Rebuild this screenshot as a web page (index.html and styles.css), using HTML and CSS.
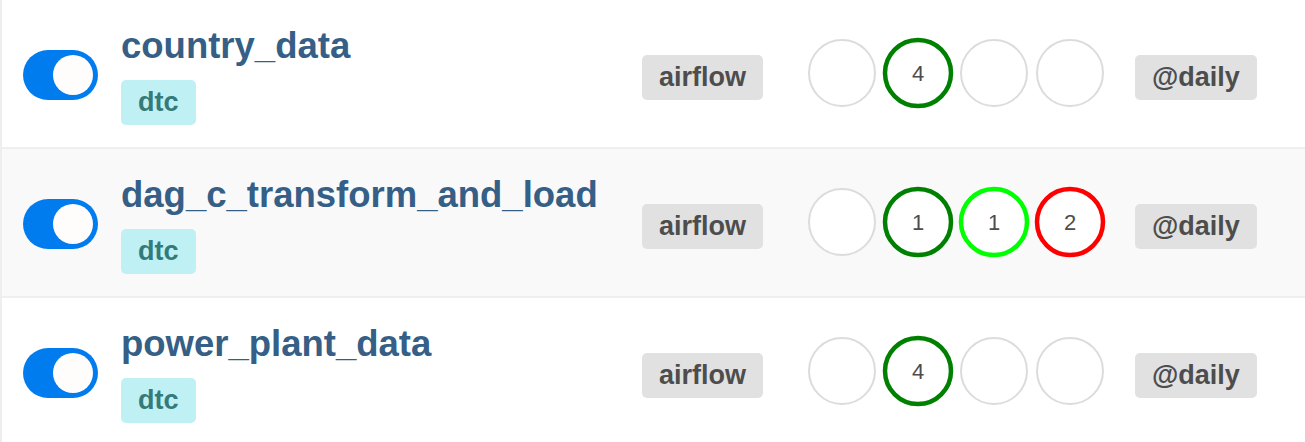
FILE: index.html
```html
<!DOCTYPE html>
<html lang="en">
<head>
<meta charset="utf-8">
<title>DAGs</title>
<link rel="stylesheet" href="styles.css">
</head>
<body>
<div class="dag-list">
  <div class="dag-row">
    <div class="cell-toggle"><span class="toggle"><span class="knob"></span></span></div>
    <div class="cell-name">
      <a class="dag-title">country_data</a>
      <span class="tag">dtc</span>
    </div>
    <div class="cell-owner"><span class="label">airflow</span></div>
    <div class="cell-runs">
      <svg class="runs" width="304" height="76" viewBox="0 0 304 76">
        <circle class="empty" cx="38" cy="38" r="33"/>
        <circle class="success" cx="114" cy="38" r="33"/>
        <text x="114" y="46">4</text>
        <circle class="empty" cx="190" cy="38" r="33"/>
        <circle class="empty" cx="266" cy="38" r="33"/>
      </svg>
    </div>
    <div class="cell-schedule"><span class="label">@daily</span></div>
  </div>
  <div class="dag-row striped">
    <div class="cell-toggle"><span class="toggle"><span class="knob"></span></span></div>
    <div class="cell-name">
      <a class="dag-title">dag_c_transform_and_load</a>
      <span class="tag">dtc</span>
    </div>
    <div class="cell-owner"><span class="label">airflow</span></div>
    <div class="cell-runs">
      <svg class="runs" width="304" height="76" viewBox="0 0 304 76">
        <circle class="empty" cx="38" cy="38" r="33"/>
        <circle class="success" cx="114" cy="38" r="33"/>
        <text x="114" y="46">1</text>
        <circle class="running" cx="190" cy="38" r="33"/>
        <text x="190" y="46">1</text>
        <circle class="failed" cx="266" cy="38" r="33"/>
        <text x="266" y="46">2</text>
      </svg>
    </div>
    <div class="cell-schedule"><span class="label">@daily</span></div>
  </div>
  <div class="dag-row">
    <div class="cell-toggle"><span class="toggle"><span class="knob"></span></span></div>
    <div class="cell-name">
      <a class="dag-title">power_plant_data</a>
      <span class="tag">dtc</span>
    </div>
    <div class="cell-owner"><span class="label">airflow</span></div>
    <div class="cell-runs">
      <svg class="runs" width="304" height="76" viewBox="0 0 304 76">
        <circle class="empty" cx="38" cy="38" r="33"/>
        <circle class="success" cx="114" cy="38" r="33"/>
        <text x="114" y="46">4</text>
        <circle class="empty" cx="190" cy="38" r="33"/>
        <circle class="empty" cx="266" cy="38" r="33"/>
      </svg>
    </div>
    <div class="cell-schedule"><span class="label">@daily</span></div>
  </div>
</div>
</body>
</html>
```
FILE: styles.css
```css
html, body {
  margin: 0;
  padding: 0;
  background: #ffffff;
}

body {
  font-family: "Liberation Sans", Arial, sans-serif;
  overflow: hidden;
}

.dag-list {
  margin-top: -2px;
  border-left: 2px solid #eeeeee;
}

.dag-row {
  display: flex;
  align-items: center;
  height: 147px;
  border-top: 2px solid #efefef;
  background: #ffffff;
}

.dag-row.striped {
  background: #f9f9f9;
}

.cell-toggle {
  padding-left: 21px;
  width: 76px;
  margin-top: 3px;
  flex: none;
}

.toggle {
  display: flex;
  justify-content: flex-end;
  align-items: center;
  box-sizing: border-box;
  width: 75px;
  height: 50px;
  padding-right: 5px;
  border-radius: 25px;
  background: #017cee;
}

.knob {
  display: block;
  width: 40px;
  height: 40px;
  border-radius: 50%;
  background: #fffdfb;
}

.cell-name {
  width: 521px;
  margin-left: 22px;
  margin-top: 3px;
  flex: none;
  display: flex;
  flex-direction: column;
  align-items: flex-start;
}

.dag-title {
  font-size: 36.5px;
  font-weight: bold;
  line-height: 42px;
  color: #355f86;
  margin-bottom: 13px;
}

.tag {
  display: inline-flex;
  align-items: center;
  height: 45px;
  padding: 0 17px;
  border-radius: 5px;
  background: #bff0f3;
  color: #337a78;
  font-size: 27px;
  font-weight: bold;
}

.cell-owner {
  width: 162px;
  flex: none;
  margin-top: 7px;
}

.label {
  display: inline-flex;
  align-items: center;
  height: 45px;
  padding: 0 17px;
  border-radius: 5px;
  background: #e1e1e1;
  color: #4d4d4d;
  font-size: 27px;
  font-weight: bold;
}

.cell-runs {
  width: 304px;
  flex: none;
  display: flex;
  margin-top: -2px;
}

.runs circle {
  fill: #ffffff;
}

.runs circle.empty {
  stroke: #dcdcdc;
  stroke-width: 2;
}

.runs circle.success {
  stroke: #008000;
  stroke-width: 4.5;
}

.runs circle.running {
  stroke: #00ff00;
  stroke-width: 4.5;
}

.runs circle.failed {
  stroke: #ff0000;
  stroke-width: 4.5;
}

.runs text {
  font-family: "Liberation Sans", Arial, sans-serif;
  font-size: 22px;
  fill: #4d4d4d;
  text-anchor: middle;
}

.cell-schedule {
  margin-left: 27px;
  margin-top: 7px;
  flex: none;
}
```
